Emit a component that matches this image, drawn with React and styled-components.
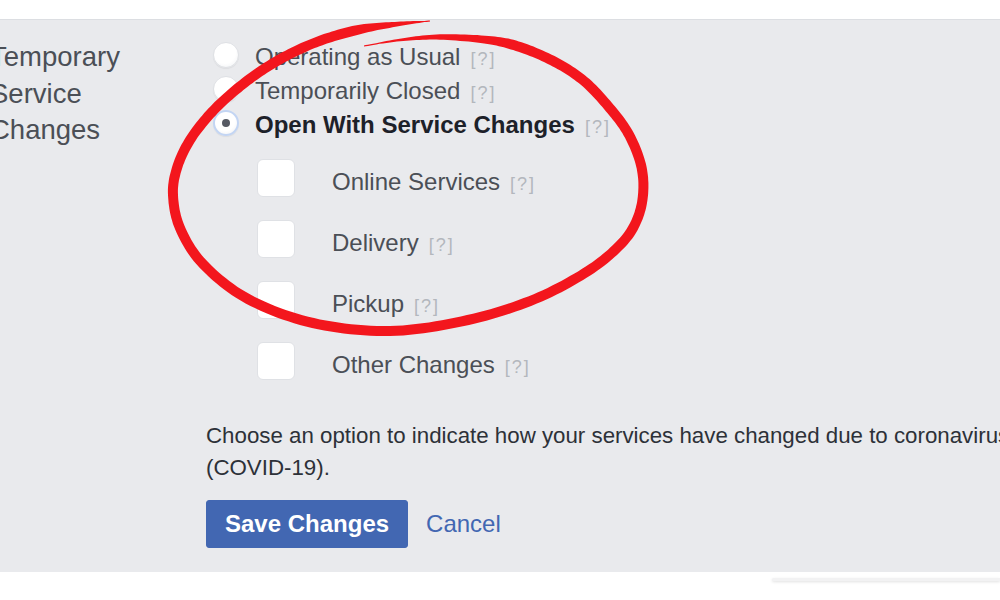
import React from "react";
import styled, { createGlobalStyle } from "styled-components";

const GlobalStyle = createGlobalStyle`
  body {
    margin: 0;
    background: #fff;
    font-family: "Liberation Sans", Arial, sans-serif;
  }
`;

const Page = styled.div`
  position: relative;
  width: 1000px;
  height: 600px;
  overflow: hidden;
  padding-top: 19px;
  box-sizing: border-box;
`;

const Panel = styled.div`
  display: grid;
  grid-template-columns: 216px 1fr;
  margin-left: -10px;
  height: 553px;
  box-sizing: border-box;
  padding: 18px 0 24px;
  background: #e9eaed;
  border-top: 1px solid #dcdee2;
`;

const FieldLabel = styled.div`
  width: 138px;
  padding-top: 1px;
  font-size: 27.5px;
  line-height: 36.5px;
  color: #4b4f56;
`;

const Options = styled.div`
  display: flex;
  flex-direction: column;
  min-width: 0;
`;

const RadioList = styled.div`
  display: flex;
  flex-direction: column;
`;

const RadioRow = styled.label`
  display: flex;
  align-items: center;
  height: 34px;
  padding-left: 7px;
`;

const Radio = styled.span`
  position: relative;
  flex: none;
  width: 26px;
  height: 26px;
  box-sizing: border-box;
  border-radius: 50%;
  background: radial-gradient(circle at 45% 40%, #fff 55%, #eceef1 100%);
  border: ${(p) => (p.checked ? "2px solid #c3d5f3" : "1px solid #dfe1e5")};
  box-shadow: 0 1px 1px rgba(0, 0, 0, 0.06);

  &::after {
    content: "";
    display: ${(p) => (p.checked ? "block" : "none")};
    position: absolute;
    left: 50%;
    top: 50%;
    width: 8px;
    height: 8px;
    margin: -4px 0 0 -4px;
    border-radius: 50%;
    background: #565a63;
  }
`;

const OptionText = styled.span`
  font-size: 24px;
  color: ${(p) => (p.bold ? "#1d2129" : "#4b4f56")};
  font-weight: ${(p) => (p.bold ? 700 : 400)};
  margin-left: ${(p) => p.gap || 16}px;
  padding-top: ${(p) => p.drop || 0}px;
  white-space: nowrap;
`;

const Help = styled.span`
  font-size: 18px;
  font-weight: 400;
  letter-spacing: 2px;
  color: #b3b7bd;
  margin-left: 10px;
`;

const CheckList = styled.div`
  display: flex;
  flex-direction: column;
  gap: 23px;
  margin-top: 19px;
  padding-left: 51px;
`;

const CheckRow = styled.label`
  display: flex;
  align-items: center;
  height: 38px;
`;

const Checkbox = styled.span`
  flex: none;
  width: 38px;
  height: 38px;
  box-sizing: border-box;
  border-radius: 6px;
  background: #fff;
  border: 1px solid #dfe1e5;
`;

const Description = styled.p`
  margin: 40px 0 0;
  width: 860px;
  font-size: 22.3px;
  line-height: 32px;
  color: #2d3138;
`;

const Actions = styled.div`
  display: flex;
  align-items: center;
  gap: 18px;
  margin-top: 16px;
`;

const SaveButton = styled.button`
  height: 48px;
  padding: 0 18px;
  border: 1px solid #4267b2;
  border-radius: 3px;
  background: #4267b2;
  color: #fff;
  font-family: inherit;
  font-size: 24px;
  font-weight: 700;
`;

const CancelLink = styled.a`
  font-size: 24px;
  color: #4267b2;
  text-decoration: none;
`;

const NextCard = styled.div`
  margin: 6px 0 0 772px;
  height: 3px;
  border-radius: 3px 0 0 3px;
  background: #f2f2f3;
  box-shadow: 0 1px 3px rgba(0, 0, 0, 0.12);
`;

const Scribble = styled.svg`
  position: absolute;
  left: 0;
  top: 0;
  pointer-events: none;
`;

// hand-drawn marker loop around the service options
const loop = [
  [430, 21], [398, 24], [362, 29], [328, 38], [298, 50], [267, 67],
  [238, 88], [212, 112], [190, 140], [177, 168], [173, 195], [180, 228],
  [203, 264], [248, 299], [313, 323], [390, 331], [468, 320], [535, 299],
  [588, 271], [620, 245], [636, 222], [643, 195], [641, 165], [628, 133],
  [608, 106], [584, 81], [555, 62], [520, 47], [488, 40], [440, 37],
  [400, 40], [364, 46],
];

function brush(pts, width) {
  const samples = [];
  const steps = 12;
  for (let i = 0; i < pts.length - 1; i++) {
    const p0 = pts[i - 1] || pts[i];
    const p1 = pts[i];
    const p2 = pts[i + 1];
    const p3 = pts[i + 2] || p2;
    for (let s = 0; s < steps; s++) {
      const t = s / steps;
      const t2 = t * t;
      const t3 = t2 * t;
      const f = (a, b, c, d) =>
        0.5 *
        (2 * b +
          (-a + c) * t +
          (2 * a - 5 * b + 4 * c - d) * t2 +
          (-a + 3 * b - 3 * c + d) * t3);
      samples.push([f(p0[0], p1[0], p2[0], p3[0]), f(p0[1], p1[1], p2[1], p3[1])]);
    }
  }
  samples.push(pts[pts.length - 1]);

  const n = samples.length;
  const left = [];
  const right = [];
  samples.forEach((p, i) => {
    const a = samples[Math.max(0, i - 1)];
    const b = samples[Math.min(n - 1, i + 1)];
    const dx = b[0] - a[0];
    const dy = b[1] - a[1];
    const len = Math.hypot(dx, dy) || 1;
    const nx = -dy / len;
    const ny = dx / len;
    const u = i / (n - 1);
    const w = Math.max(1.2, width * Math.min(1, u / 0.07, (1 - u) / 0.12));
    left.push([p[0] + (nx * w) / 2, p[1] + (ny * w) / 2]);
    right.push([p[0] - (nx * w) / 2, p[1] - (ny * w) / 2]);
  });
  const all = left.concat(right.reverse());
  return "M" + all.map((p) => p[0].toFixed(1) + " " + p[1].toFixed(1)).join(" L") + " Z";
}

const radios = [
  { label: "Operating as Usual" },
  { label: "Temporarily Closed" },
  { label: "Open With Service Changes", checked: true },
];

const services = ["Online Services", "Delivery", "Pickup", "Other Changes"];

export default function App() {
  return (
    <Page>
      <GlobalStyle />
      <Panel>
        <FieldLabel>Temporary Service Changes</FieldLabel>
        <Options>
          <RadioList>
            {radios.map((r) => (
              <RadioRow key={r.label}>
                <Radio checked={r.checked} />
                <OptionText bold={r.checked} drop={4}>
                  {r.label}
                  <Help>[?]</Help>
                </OptionText>
              </RadioRow>
            ))}
          </RadioList>
          <CheckList>
            {services.map((s) => (
              <CheckRow key={s}>
                <Checkbox />
                <OptionText gap={37} drop={8}>
                  {s}
                  <Help>[?]</Help>
                </OptionText>
              </CheckRow>
            ))}
          </CheckList>
          <Description>
            Choose an option to indicate how your services have changed due to
            coronavirus (COVID-19).
          </Description>
          <Actions>
            <SaveButton>Save Changes</SaveButton>
            <CancelLink href="#">Cancel</CancelLink>
          </Actions>
        </Options>
      </Panel>
      <NextCard />
      <Scribble width="1000" height="600" viewBox="0 0 1000 600">
        <path d={brush(loop, 10)} fill="#f3161d" />
      </Scribble>
    </Page>
  );
}
